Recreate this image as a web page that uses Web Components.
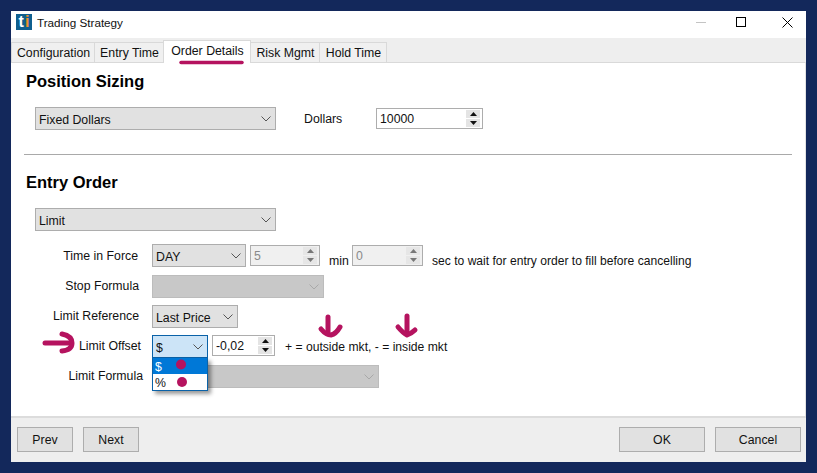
<!DOCTYPE html>
<html>
<head>
<meta charset="utf-8">
<title>Trading Strategy</title>
<style>
  html, body { margin: 0; height: 100%; }
  body {
    background: #13285b;
    padding: 11px;
    box-sizing: border-box;
    font: 12.3px "Liberation Sans", Arial, sans-serif;
    color: #111;
    overflow: hidden;
  }
</style>
</head>
<body>
<ts-window title="Trading Strategy">
  <ts-tabs slot="tabs" active="Order Details" tabs="Configuration,Entry Time,Order Details,Risk Mgmt,Hold Time"></ts-tabs>

  <ts-section heading="Position Sizing" style="--section-top: 8px; --content-top: 16px;">
    <div style="display:flex;align-items:center">
      <ts-combo width="241" value="Fixed Dollars"></ts-combo>
      <span style="margin-left:28px;width:72px">Dollars</span>
      <ts-spin width="107" value="10000"></ts-spin>
    </div>
  </ts-section>

  <ts-divider></ts-divider>

  <ts-section heading="Entry Order" style="--section-top: 17px; --content-top: 16px;">
    <ts-combo width="241" value="Limit"></ts-combo>
    <div style="height:13px"></div>
    <ts-row label="Time in Force" inset="14" style="margin-bottom:8px;--label-lift:0px">
      <ts-combo width="94" value="DAY"></ts-combo>
      <ts-spin width="70" value="5" disabled style="margin-left:4px"></ts-spin>
      <span style="margin:11px 0 0 9px;width:23px">min</span>
      <ts-spin width="71" value="0" disabled></ts-spin>
      <span style="margin:11px 0 0 9px;font-size:12.1px">sec to wait for entry order to fill before cancelling</span>
    </ts-row>
    <ts-row label="Stop Formula" inset="13" style="margin-bottom:7px">
      <ts-combo width="172" disabled></ts-combo>
    </ts-row>
    <ts-row label="Limit Reference" inset="13" style="margin-bottom:7px">
      <ts-combo width="86" value="Last Price"></ts-combo>
    </ts-row>
    <ts-row label="Limit Offset" inset="11" style="margin-bottom:7px">
      <ts-combo width="56" value="$" open options="$,%"></ts-combo>
      <ts-spin width="63" value="-0,02" style="margin-left:4px;align-self:flex-start"></ts-spin>
      <span style="margin-left:10px;font-size:12.15px">+ = outside mkt, - = inside mkt</span>
    </ts-row>
    <ts-row label="Limit Formula" inset="9">
      <ts-combo width="227" disabled></ts-combo>
    </ts-row>
  </ts-section>

  <ts-button slot="left" width="56">Prev</ts-button>
  <ts-button slot="left" width="56">Next</ts-button>
  <ts-button slot="right" width="86">OK</ts-button>
  <ts-button slot="right" width="86">Cancel</ts-button>

  <!-- magenta marks someone drew over the screenshot -->
  <svg slot="marks" width="795" height="451" viewBox="11 11 795 451" fill="none" stroke="#b5135f" stroke-linecap="round" stroke-linejoin="round">
    <path d="M181 62.5H242" stroke-width="3.5"/>
    <path d="M45 343H70" stroke-width="5"/>
    <path d="M62 334Q72 336 72 343Q72 350 62 351" stroke-width="5"/>
    <path d="M328 317V333" stroke-width="5"/>
    <path d="M321 329Q326 335 331 335Q336 334 340 327" stroke-width="5"/>
    <path d="M407 316V332" stroke-width="5"/>
    <path d="M398 327Q403 333 407 335Q412 333 415 330" stroke-width="5"/>
    <circle cx="181" cy="364.5" r="5" fill="#b5135f" stroke="none"/>
    <circle cx="182" cy="382" r="5" fill="#b5135f" stroke="none"/>
  </svg>
</ts-window>

<script>
const chevron = (color) => `<svg width="10" height="6" viewBox="0 0 10 6" fill="none" stroke="${color}" stroke-width="1"><path d="M.5 .5L5 5L9.5 .5"/></svg>`;

class TsWindow extends HTMLElement {
  constructor() {
    super();
    this.attachShadow({ mode: 'open' });
  }

  connectedCallback() {
    this.shadowRoot.innerHTML = `
      <style>
        :host {
          display: flex;
          flex-direction: column;
          position: relative;
          width: 795px;
          height: 451px;
          background: #fff;
        }
        .titlebar {
          display: flex;
          align-items: center;
          box-sizing: border-box;
          height: 27px;
          flex: none;
          padding: 0 0 5px 5px;
        }
        .logo {
          display: flex;
          justify-content: center;
          gap: 1px;
          width: 16px;
          height: 16px;
          background: #0f5f8f;
          font: bold 16px/16px "Liberation Sans", sans-serif;
          color: #fff;
        }
        .logo b { color: #f0932b; }
        .title { margin-left: 5px; font-size: 11.7px; }
        .controls { margin-left: auto; display: flex; align-items: center; }
        .controls svg { display: block; }
        .panel {
          flex: 1;
          min-height: 0;
          border-top: 1px solid #d9d9d9;
          border-right: 1px solid #e3e3e3;
          padding: 0 13px 0 13px;
        }
        .footer {
          display: flex;
          justify-content: space-between;
          flex: none;
          height: 46px;
          box-sizing: border-box;
          border-top: 2px solid #dcdcdc;
          background: #eee;
          padding: 9px 5px 0 6px;
        }
        .group { display: flex; gap: 10px; }
        .marks { position: absolute; left: 0; top: 0; z-index: 5; pointer-events: none; }
      </style>
      <div class="titlebar">
        <div class="logo"><span>t</span><b>i</b></div>
        <span class="title">${this.getAttribute('title')}</span>
        <div class="controls">
          <svg width="10" height="1" style="margin-right:30px"><rect width="10" height="1" fill="#c4c4c4"/></svg>
          <svg width="10" height="10" style="margin-right:36px"><rect x=".5" y=".5" width="9" height="9" fill="none" stroke="#000"/></svg>
          <svg width="11" height="11" style="margin-right:13px"><path d="M.5 .5L10.5 10.5M10.5 .5L.5 10.5" stroke="#000" fill="none"/></svg>
        </div>
      </div>
      <slot name="tabs"></slot>
      <div class="panel"><slot></slot></div>
      <div class="footer">
        <div class="group"><slot name="left"></slot></div>
        <div class="group"><slot name="right"></slot></div>
      </div>
      <div class="marks"><slot name="marks"></slot></div>
    `;
  }
}

class TsTabs extends HTMLElement {
  constructor() {
    super();
    this.attachShadow({ mode: 'open' });
  }

  connectedCallback() {
    const widths = { 'Configuration': 84, 'Entry Time': 70, 'Order Details': 88, 'Risk Mgmt': 70, 'Hold Time': 68 };
    const active = this.getAttribute('active');
    const tabs = this.getAttribute('tabs').split(',').map((t) =>
      `<div class="tab ${t === active ? 'on' : ''}" style="width:${widths[t]}px">${t}</div>`).join('');
    this.shadowRoot.innerHTML = `
      <style>
        :host {
          display: flex;
          align-items: flex-end;
          height: 24px;
          flex: none;
          background: #eee;
          padding-left: 1px;
        }
        .tab {
          box-sizing: border-box;
          height: 20px;
          line-height: 20px;
          padding-left: 1px;
          text-align: center;
          background: #f0f0f0;
          border: 1px solid #d9d9d9;
          border-bottom: 0;
          margin-left: -1px;
          white-space: nowrap;
        }
        .tab:first-child { margin-left: 0; }
        .on {
          height: 23px;
          line-height: 21px;
          background: #fff;
          position: relative;
          top: 1px;
          z-index: 1;
          margin-top: -3px;
        }
      </style>
      ${tabs}
    `;
  }
}

class TsSection extends HTMLElement {
  constructor() {
    super();
    this.attachShadow({ mode: 'open' });
  }

  connectedCallback() {
    this.shadowRoot.innerHTML = `
      <style>
        :host { display: block; padding: var(--section-top, 0) 0 0 0; }
        h2 {
          margin: 0 0 var(--content-top, 16px) 2px;
          font: bold 16.5px/20px "Liberation Sans", sans-serif;
          color: #000;
        }
        .body { padding-left: 11px; }
      </style>
      <h2>${this.getAttribute('heading')}</h2>
      <div class="body"><slot></slot></div>
    `;
  }
}

class TsDivider extends HTMLElement {
  constructor() {
    super();
    this.attachShadow({ mode: 'open' }).innerHTML = `
      <style>
        :host { display: block; margin: 24px 0 0 0; height: 1px; background: #a9a9a9; width: 768px; }
      </style>
    `;
  }
}

class TsRow extends HTMLElement {
  constructor() {
    super();
    this.attachShadow({ mode: 'open' });
  }

  connectedCallback() {
    this.shadowRoot.innerHTML = `
      <style>
        :host { display: flex; align-items: center; height: 23px; }
        .label {
          width: 117px;
          flex: none;
          box-sizing: border-box;
          text-align: right;
          padding-right: ${this.getAttribute('inset')}px;
          padding-bottom: var(--label-lift, 2px);
        }
        .fields { display: flex; align-items: center; }
      </style>
      <div class="label">${this.getAttribute('label')}</div>
      <div class="fields"><slot></slot></div>
    `;
  }
}

class TsCombo extends HTMLElement {
  constructor() {
    super();
    this.attachShadow({ mode: 'open' });
  }

  connectedCallback() {
    const disabled = this.hasAttribute('disabled');
    const open = this.hasAttribute('open');
    const value = this.getAttribute('value') || '';
    const options = (this.getAttribute('options') || '').split(',').filter(Boolean);
    const menu = open ? `<div class="menu">${options.map((o) =>
      `<div class="opt ${o === value ? 'sel' : ''}">${o}</div>`).join('')}</div>` : '';
    this.shadowRoot.innerHTML = `
      <style>
        :host {
          display: block;
          position: relative;
          flex: none;
          width: ${this.getAttribute('width')}px;
          height: 23px;
        }
        .box {
          display: flex;
          align-items: center;
          justify-content: space-between;
          box-sizing: border-box;
          height: 100%;
          padding: 0 4px 0 3px;
          border: 1px solid #adadad;
          background: #e1e1e1;
          color: #111;
        }
        .box span { padding-top: 3px; }
        :host([disabled]) .box { background: #c8c8c8; border-color: #bcbcbc; }
        :host([open]) .box { border-color: #0a62a8; background: #cce4f7; }
        svg { display: block; margin-right: 0; }
        .menu {
          position: absolute;
          left: 0;
          top: 23px;
          z-index: 2;
          width: 56px;
          box-sizing: border-box;
          border: 1px solid #0a62a8;
          border-top: 0;
          background: #fff;
          box-shadow: 3px 3px 4px rgba(0, 0, 0, .4);
        }
        .opt { height: 16px; line-height: 18px; padding-left: 2px; }
        .sel { background: #0078d7; color: #fff; }
      </style>
      <div class="box"><span>${value}</span>${chevron(disabled ? '#a8a8a8' : '#555')}</div>
      ${menu}
    `;
  }
}

class TsSpin extends HTMLElement {
  constructor() {
    super();
    this.attachShadow({ mode: 'open' });
  }

  connectedCallback() {
    this.shadowRoot.innerHTML = `
      <style>
        :host {
          display: flex;
          align-items: center;
          flex: none;
          box-sizing: border-box;
          width: ${this.getAttribute('width')}px;
          height: 21px;
          border: 1px solid #adadad;
          padding: 1px 1px 1px 3px;
          background: #fff;
          color: #111;
        }
        :host([disabled]) { background: #f0f0f0; color: #8a8a8a; }
        span { flex: 1; }
        .btns { display: flex; flex-direction: column; gap: 1px; width: 14px; height: 100%; margin-right: 1px; }
        .btn {
          flex: 1;
          display: flex;
          align-items: center;
          justify-content: center;
          background: #e4e4e4;
        }
        :host([disabled]) .btn { background: #e6e6e6; }
        svg { display: block; fill: #111; }
        :host([disabled]) svg { fill: #777; }
      </style>
      <span>${this.getAttribute('value')}</span>
      <div class="btns">
        <div class="btn"><svg width="7" height="4"><path d="M3.5 0L7 4H0z"/></svg></div>
        <div class="btn"><svg width="7" height="4"><path d="M0 0H7L3.5 4z"/></svg></div>
      </div>
    `;
  }
}

class TsButton extends HTMLElement {
  constructor() {
    super();
    this.attachShadow({ mode: 'open' });
  }

  connectedCallback() {
    this.shadowRoot.innerHTML = `
      <style>
        :host {
          display: flex;
          align-items: center;
          justify-content: center;
          box-sizing: border-box;
          width: ${this.getAttribute('width')}px;
          height: 25px;
          border: 1px solid #adadad;
          background: #e1e1e1;
          color: #111;
        }
      </style>
      <slot></slot>
    `;
  }
}

customElements.define('ts-window', TsWindow);
customElements.define('ts-tabs', TsTabs);
customElements.define('ts-section', TsSection);
customElements.define('ts-divider', TsDivider);
customElements.define('ts-row', TsRow);
customElements.define('ts-combo', TsCombo);
customElements.define('ts-spin', TsSpin);
customElements.define('ts-button', TsButton);
</script>
</body>
</html>
